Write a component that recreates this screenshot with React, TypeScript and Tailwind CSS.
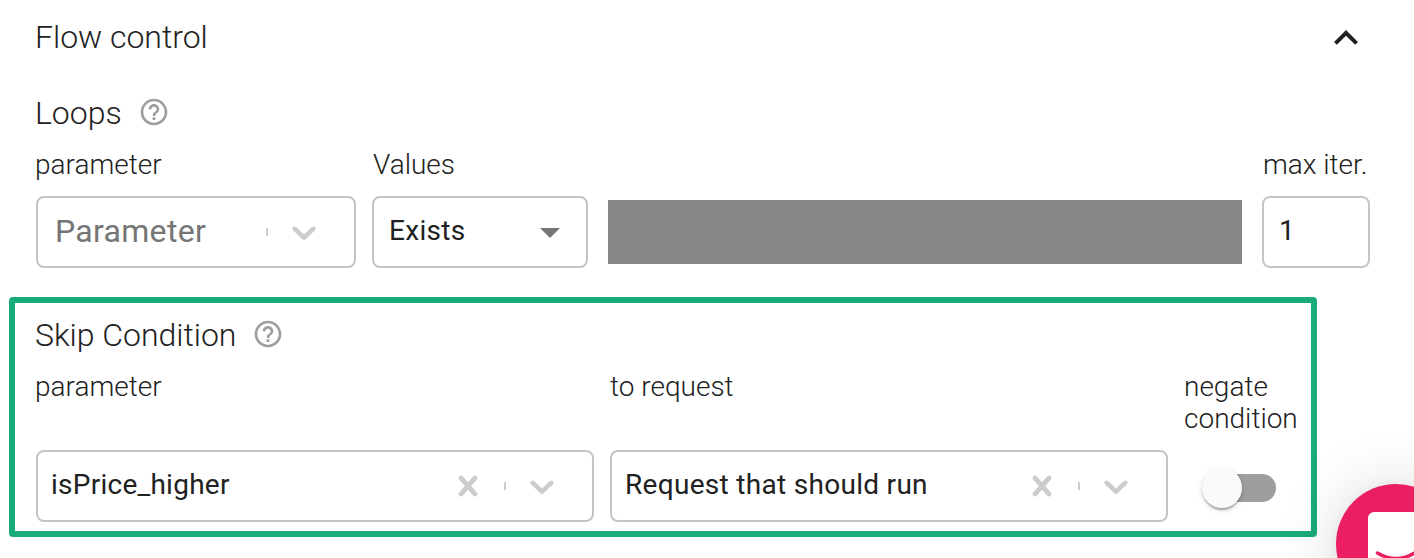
import type { ReactNode } from "react";

const CHEVRON =
  "M4.516 7.548c0.436-0.446 1.043-0.481 1.576 0l3.908 3.747 3.908-3.747c0.533-0.481 1.141-0.446 1.574 0 0.436 0.445 0.408 1.197 0 1.615-0.406 0.418-4.695 4.502-4.695 4.502-0.217 0.223-0.502 0.335-0.787 0.335s-0.57-0.112-0.789-0.335c0 0-4.287-4.084-4.695-4.502s-0.436-1.17 0-1.615z";
const CROSS =
  "M14.348 14.849c-0.469 0.469-1.229 0.469-1.697 0l-2.651-3.030-2.651 3.029c-0.469 0.469-1.229 0.469-1.697 0-0.469-0.469-0.469-1.229 0-1.697l2.758-3.15-2.759-3.152c-0.469-0.469-0.469-1.228 0-1.697s1.228-0.469 1.697 0l2.652 3.031 2.651-3.031c0.469-0.469 1.228-0.469 1.697 0s0.469 1.229 0 1.697l-2.758 3.152 2.758 3.15c0.469 0.469 0.469 1.229 0 1.698z";

function IndicatorIcon({ d }: { d: string }) {
  return (
    <svg viewBox="0 0 20 20" className="mx-4 size-10 shrink-0 fill-[#cccccc]">
      <path d={d} />
    </svg>
  );
}

function HelpIcon() {
  return (
    <svg viewBox="0 0 24 24" className="size-8 fill-[#9e9e9e]">
      <path d="M11 18h2v-2h-2v2zm1-16C6.48 2 2 6.48 2 12s4.480 10 10 10 10-4.480 10-10S17.520 2 12 2zm0 18c-4.410 0-8-3.590-8-8s3.590-8 8-8 8 3.590 8 8-3.590 8-8 8zm0-14c-2.210 0-4 1.790-4 4h2c0-1.100.9-2 2-2s2 .9 2 2c0 2-3 1.750-3 5h2c0-2.250 3-2.500 3-5 0-2.210-1.790-4-4-4z" />
    </svg>
  );
}

function Heading({ children }: { children: ReactNode }) {
  return (
    <div className="-ml-px flex h-10 items-center gap-4">
      <h3 className="pt-0.5 text-[32px] leading-10 font-light tracking-[-0.02px]">{children}</h3>
      <HelpIcon />
    </div>
  );
}

function Label({ children }: { children: ReactNode }) {
  return <div className="-mb-px pt-px text-[28px] leading-8 font-light">{children}</div>;
}

function Select({ children, clearable }: { children: ReactNode; clearable?: boolean }) {
  return (
    <div className="flex h-[72px] items-center rounded-lg border-2 border-[#c4c4c4] pr-3.5">
      <div className="min-w-0 flex-1">{children}</div>
      {clearable && <IndicatorIcon d={CROSS} />}
      <span className="h-2 w-0.5 bg-[#cccccc]" />
      <IndicatorIcon d={CHEVRON} />
    </div>
  );
}

function ChatButton() {
  return (
    <button className="absolute top-[484px] left-[1336px] size-[120px] rounded-full bg-[#eb1e63] shadow-[0_2px_12px_rgba(0,0,0,0.06),0_4px_64px_rgba(0,0,0,0.16)]">
      <svg viewBox="0 0 120 120" className="size-full">
        <path d="M38 28h42a8 8 0 0 1 8 8v60l-14-8H40a8 8 0 0 1-8-8V34a6 6 0 0 1 6-6z" fill="#fff" />
        <path d="M41.500 69q18.500 11 37 0" fill="none" stroke="#eb1e63" strokeWidth="3.500" strokeLinecap="round" />
      </svg>
    </button>
  );
}

export default function App() {
  return (
    <main className="relative h-[558px] w-[1414px] overflow-hidden bg-white font-['Roboto',sans-serif] text-[#212121]">
      <header className="flex h-[76px] items-center justify-between pr-11 pl-[35px]">
        <h2 className="pb-0.5 text-[32px] leading-10 font-light tracking-[-0.02px]">Flow control</h2>
        <svg viewBox="0 0 24 24" className="size-12 rotate-180 fill-[#212121]">
          <path d="M16.590 8.590L12 13.170 7.410 8.590 6 10l6 6 6-6z" />
        </svg>
      </header>

      <section className="px-9 pt-4">
        <Heading>Loops</Heading>
        <div className="mt-4 flex items-end gap-4">
          <div className="flex w-80 flex-col gap-4">
            <div className="-ml-px">
              <Label>parameter</Label>
            </div>
            <Select>
              <span className="relative -top-px pl-[17px] text-[32px] tracking-[0.3px] text-[#757575]">Parameter</span>
            </Select>
          </div>
          <div className="flex w-[216px] flex-col gap-4">
            <div className="pl-px">
              <Label>Values</Label>
            </div>
            <div className="flex h-[72px] items-center justify-between rounded-lg border-2 border-[#c4c4c4] pr-3 pl-[15px] text-[28px] tracking-[0.3px]">
              <span className="-mt-0.5">Exists</span>
              <svg viewBox="0 0 24 24" className="size-12 fill-[#757575]">
                <path d="M7 10l5 5 5-5z" />
              </svg>
            </div>
          </div>
          <div className="mb-1 ml-1 h-16 w-[634px] bg-[#868686]" />
          <div className="ml-1 flex w-[108px] flex-col gap-4">
            <div className="pl-px">
              <Label>max iter.</Label>
            </div>
            <div className="flex h-[72px] items-center rounded-lg border-2 border-[#c4c4c4] pl-[15px] text-[28px]">
              <span className="-mt-0.5">1</span>
            </div>
          </div>
        </div>
      </section>

      <section className="mt-[29px] ml-[9px] h-60 w-[1308px] rounded border-[6px] border-[#19ac79] pt-[11px] pl-[21px]">
        <Heading>Skip Condition</Heading>
        <div className="mt-4 flex gap-4">
          <div className="flex w-[558px] flex-col gap-12">
            <div className="-ml-px">
              <Label>parameter</Label>
            </div>
            <Select clearable>
              <span className="relative -top-px pl-[13px] text-[28px] tracking-[0.26px]">isPrice_higher</span>
            </Select>
          </div>
          <div className="flex w-[558px] flex-col gap-12">
            <Label>to request</Label>
            <Select clearable>
              <span className="relative -top-px pl-[13px] text-[28px] tracking-[0.3px]">Request that should run</span>
            </Select>
          </div>
          <div className="flex w-28 flex-col">
            <Label>
              negate
              <br />
              condition
            </Label>
            <div className="mt-10 ml-6 flex h-7 w-[68px] items-center rounded-full bg-[#9e9e9e]">
              <span className="-ml-1.5 size-10 shrink-0 rounded-full bg-[#fafafa] shadow-[0_4px_2px_-2px_rgba(0,0,0,0.2),0_2px_2px_rgba(0,0,0,0.14),0_2px_6px_rgba(0,0,0,0.12)]" />
            </div>
          </div>
        </div>
      </section>

      <ChatButton />
    </main>
  );
}
